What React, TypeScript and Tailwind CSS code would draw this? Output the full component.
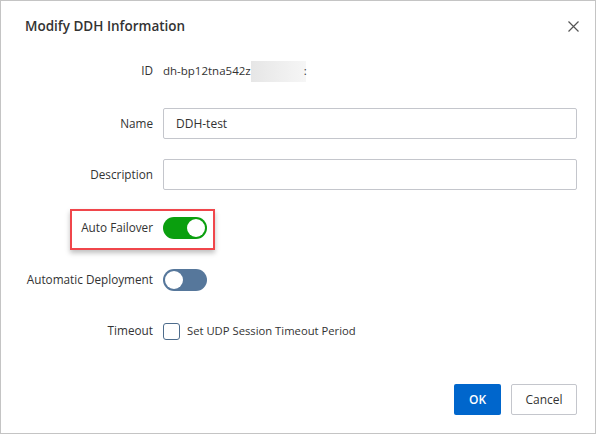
import React, { useState } from "react";

const Toggle = ({ on, onChange, color }: { on: boolean; onChange: () => void; color: string }) => {
  return (
    <button
      type="button"
      onClick={onChange}
      className={`relative h-[22px] w-[44px] rounded-full ${color}`}
    >
      <span
        className={`absolute top-[2px] h-[18px] w-[18px] rounded-full bg-white ${on ? "left-[24px]" : "left-[2px]"}`}
      />
    </button>
  );
};

const Row = ({ label, children, className }: { label: string; children: React.ReactNode; className?: string }) => (
  <div className={`flex items-center ${className ?? ""}`}>
    <div className="w-[152px] shrink-0 text-right text-[11.75px] text-[#333]">{label}</div>
    <div className="ml-[10px] flex w-[414px] items-center">{children}</div>
  </div>
);

const App = () => {
  const [failover, setFailover] = useState(true);
  const [deploy, setDeploy] = useState(false);
  const [timeout, setTimeoutChecked] = useState(false);
  const [name, setName] = useState("DDH-test");
  const [desc, setDesc] = useState("");

  return (
    <div
      className="flex h-[434px] w-[596px] flex-col border border-[#c4c4c4] bg-white text-[#333]"
      style={{ fontFamily: '"Segoe UI", "Open Sans", sans-serif' }}
    >
      <div className="flex h-[51px] items-center justify-between pl-[24px] pr-[16px]">
        <div className="text-[13.5px] font-semibold text-[#333]">Modify DDH Information</div>
        <button type="button" className="text-[#666]">
          <svg width="11" height="11" viewBox="0 0 11 11">
            <path d="M0.5 0.5 L10.5 10.5 M10.5 0.5 L0.5 10.5" stroke="#555" strokeWidth="1.2" />
          </svg>
        </button>
      </div>

      <Row label="ID" className="mt-[8px] h-[22px]">
        <span className="text-[11.5px] text-[#333]">dh-bp12tna542z</span>
        <span className="h-[21px] w-[55px] bg-gradient-to-r from-[#e6e6e6] to-[#f6f6f6]" />
        <span className="-ml-[2px] text-[11.5px] text-[#333]">:</span>
      </Row>

      <Row label="Name" className="mt-[26px]">
        <input
          value={name}
          onChange={(e) => setName(e.target.value)}
          className="h-[31px] w-full rounded-[2px] border border-[#c4c6cc] px-[12px] text-[12px] text-[#333] outline-none"
        />
      </Row>

      <Row label="Description" className="mt-[20px]">
        <input
          value={desc}
          onChange={(e) => setDesc(e.target.value)}
          className="h-[31px] w-full rounded-[2px] border border-[#c4c6cc] px-[12px] text-[12px] text-[#333] outline-none"
        />
      </Row>

      <div className="relative mt-[27px]">
        <Row label="Auto Failover" className="h-[22px]">
          <Toggle on={failover} onChange={() => setFailover(!failover)} color={failover ? "bg-[#0a9f0e]" : "bg-[#56779b]"} />
        </Row>
        <div className="pointer-events-none absolute left-[69px] top-[-8px] h-[41px] w-[145px] border-2 border-[#f0464b] shadow-[0_3px_5px_rgba(0,0,0,0.25)]" />
      </div>

      <Row label="Automatic Deployment" className="mt-[30px] h-[22px]">
        <Toggle on={deploy} onChange={() => setDeploy(!deploy)} color={deploy ? "bg-[#0a9f0e]" : "bg-[#56779b]"} />
      </Row>

      <Row label="Timeout" className="mt-[29px] h-[22px]">
        <label className="flex cursor-pointer items-center text-[11.25px] text-[#333]">
          <span
            onClick={() => setTimeoutChecked(!timeout)}
            className={`flex h-[17px] w-[17px] items-center justify-center rounded-[3px] border border-[#4d6c8c] ${timeout ? "bg-[#0066cc]" : "bg-white"}`}
          />
          <span className="ml-[7px]">Set UDP Session Timeout Period</span>
        </label>
      </Row>

      <div className="mt-[42px] flex justify-end gap-[10px] pr-[18px]">
        <button type="button" className="h-[31px] w-[47px] rounded-[2px] bg-[#0066cc] text-[12px] font-semibold text-white">
          OK
        </button>
        <button type="button" className="h-[31px] w-[66px] rounded-[2px] border border-[#c4c6cc] bg-white text-[12px] text-[#333]">
          Cancel
        </button>
      </div>
    </div>
  );
};

export default App;
